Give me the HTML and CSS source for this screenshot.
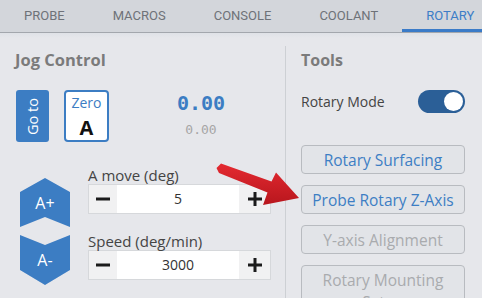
FILE: index.html
```html
<!DOCTYPE html>
<html>
<head>
<meta charset="utf-8">
<link rel="stylesheet" href="styles.css">
</head>
<body>
<nav class="tabs">
  <div class="tab">Probe</div>
  <div class="tab">Macros</div>
  <div class="tab">Console</div>
  <div class="tab">Coolant</div>
  <div class="tab active">Rotary</div>
</nav>
<main class="main">
  <section class="left">
    <h2 class="heading">Jog Control</h2>
    <div class="pos-row">
      <button class="goto"><span>Go to</span></button>
      <button class="zero"><span class="zl">Zero</span><span class="za">A</span></button>
      <div class="readout">
        <div class="big">0.00</div>
        <div class="small">0.00</div>
      </div>
    </div>
    <div class="jog-row">
      <div class="jog-btns">
        <button class="jog plus">A+</button>
        <button class="jog minus">A-</button>
      </div>
      <div class="fields">
        <label class="field-label">A move (deg)</label>
        <div class="stepper">
          <span class="step dec"><svg width="14" height="14" viewBox="0 0 14 14"><path d="M0 7H14" stroke="#1b1b1b" stroke-width="3"/></svg></span>
          <span class="val">5</span>
          <span class="step inc"><svg width="14" height="14" viewBox="0 0 14 14"><path d="M0 7H14M7 0V14" stroke="#1b1b1b" stroke-width="3"/></svg></span>
        </div>
        <label class="field-label second">Speed (deg/min)</label>
        <div class="stepper">
          <span class="step dec"><svg width="14" height="14" viewBox="0 0 14 14"><path d="M0 7H14" stroke="#1b1b1b" stroke-width="3"/></svg></span>
          <span class="val">3000</span>
          <span class="step inc"><svg width="14" height="14" viewBox="0 0 14 14"><path d="M0 7H14M7 0V14" stroke="#1b1b1b" stroke-width="3"/></svg></span>
        </div>
      </div>
    </div>
  </section>
  <section class="right">
    <h2 class="heading">Tools</h2>
    <div class="mode-row">
      <span class="mode-label">Rotary Mode</span>
      <span class="toggle"><span class="knob"></span></span>
    </div>
    <div class="tools">
      <button class="tool">Rotary Surfacing</button>
      <button class="tool">Probe Rotary Z-Axis</button>
      <button class="tool disabled">Y-axis Alignment</button>
      <button class="tool disabled tall">Rotary Mounting Setup</button>
    </div>
  </section>
</main>
<svg class="callout" width="482" height="298" viewBox="0 0 482 298">
  <defs>
    <linearGradient id="red" x1="0" y1="0" x2="0" y2="1">
      <stop offset="0" stop-color="#e42a31"/>
      <stop offset="1" stop-color="#b8161d"/>
    </linearGradient>
  </defs>
  <polygon fill="url(#red)" points="221,163.5 271.5,181.5 276,172.5 299,198 263,205 267.5,192.5 219,173 216.5,168"/>
</svg>
</body>
</html>
```
FILE: styles.css
```css
body {
  margin: 0;
  width: 482px;
  height: 298px;
  overflow: hidden;
  background: #e6e7eb;
  font-family: "Open Sans", "Liberation Sans", sans-serif;
  position: relative;
}

.tabs {
  display: flex;
  height: 32px;
  background: #d3d6db;
  border-bottom: 1px solid #a3a7ad;
  overflow: hidden;
}

.tab {
  flex: none;
  padding: 0 24px;
  font-family: Roboto, "Liberation Sans", sans-serif;
  font-size: 13px;
  text-transform: uppercase;
  color: #6e7278;
  line-height: 32px;
}

.tab.active {
  color: #3c7dc7;
  box-shadow: inset 0 -3px 0 #3a7bc8;
}

.main {
  display: flex;
  height: 265px;
  background: linear-gradient(#dfe2e7, #e6e7eb 5px);
}

.left {
  width: 286px;
  box-sizing: border-box;
  margin-top: 13px;
  padding: 3px 0 0 15px;
  border-right: 1px solid #cdd0d4;
}

.heading {
  margin: 0;
  font-size: 16.5px;
  font-weight: 700;
  line-height: 22px;
  color: #7b7b7b;
}

.right .heading {
  font-size: 16px;
}

.pos-row {
  display: flex;
  margin-top: 19px;
  height: 52px;
}

button {
  font-family: inherit;
  cursor: pointer;
}

.goto {
  margin-left: 1px;
  width: 33px;
  height: 52px;
  padding: 0;
  border: none;
  border-radius: 3px;
  background: #3c7dc3;
  color: #fff;
  display: flex;
  align-items: center;
  justify-content: center;
}

.goto span {
  writing-mode: vertical-rl;
  transform: rotate(180deg);
  font-size: 14.5px;
}

.zero {
  margin-left: 15px;
  width: 45px;
  height: 52px;
  box-sizing: border-box;
  padding: 2px 0 0;
  border: 2px solid #3c7dc3;
  border-radius: 4px;
  background: #fff;
  display: flex;
  flex-direction: column;
  align-items: center;
}

.zl {
  font-size: 14px;
  line-height: 18px;
  color: #3c7dc3;
}

.za {
  margin-top: 4px;
  font-size: 20px;
  font-weight: 700;
  line-height: 24px;
  color: #111;
}

.readout {
  flex: 1;
  margin-left: 8px;
  padding-top: 1px;
  text-align: center;
}

.big {
  font-family: "DejaVu Sans Mono", monospace;
  font-weight: 700;
  font-size: 20px;
  line-height: 24px;
  color: #3c7dc3;
}

.small {
  margin-top: 7px;
  font-family: "DejaVu Sans Mono", monospace;
  font-size: 13px;
  line-height: 16px;
  color: #a6a6a6;
}

.jog-row {
  display: flex;
  margin-top: 24px;
}

.jog-btns {
  margin: 12px 0 0 5px;
  width: 50px;
  display: flex;
  flex-direction: column;
  gap: 8px;
}

.jog {
  width: 50px;
  padding: 0;
  border: none;
  background: #3c7dc3;
  color: #fff;
  font-size: 16px;
}

.jog.plus {
  height: 49px;
  clip-path: polygon(50% 0, 100% 14px, 100% 100%, 50% 39px, 0 100%, 0 14px);
}

.jog.minus {
  height: 50px;
  clip-path: polygon(0 0, 50% 10px, 100% 0, 100% 35px, 50% 100%, 0 35px);
}

.fields {
  margin-left: 18px;
  width: 183px;
}

.field-label {
  display: block;
  font-size: 15px;
  line-height: 18px;
  color: #444;
}

.field-label.second {
  margin-top: 18px;
}

.stepper {
  display: flex;
  height: 30px;
  box-sizing: border-box;
  border: 1px solid #d6d8db;
  background: #fff;
}

.step {
  width: 28px;
  background: #f1f1f2;
  display: flex;
  align-items: center;
  justify-content: center;
}

.step.inc {
  width: 31px;
}

.val {
  flex: 1;
  text-align: center;
  font-size: 14px;
  line-height: 28px;
  color: #333;
}

.right {
  flex: 1;
  margin-top: 13px;
  padding: 3px 0 0 15px;
}

.mode-row {
  display: flex;
  align-items: center;
  justify-content: space-between;
  width: 164px;
  height: 23px;
  margin-top: 19px;
}

.mode-label {
  font-size: 14px;
  color: #444;
}

.toggle {
  width: 47px;
  height: 23px;
  box-sizing: border-box;
  padding: 2px;
  border-radius: 12px;
  background: #2b5f97;
  display: flex;
  justify-content: flex-end;
}

.knob {
  width: 19px;
  height: 19px;
  border-radius: 50%;
  background: #fff;
}

.tools {
  display: flex;
  flex-direction: column;
  gap: 11px;
  width: 164px;
  margin-top: 32px;
}

.tool {
  height: 29px;
  box-sizing: border-box;
  padding: 0 10px;
  border: 1px solid #b8bbc0;
  border-radius: 4px;
  background: #e2e4e8;
  color: #3d7ec4;
  font-size: 15.5px;
  line-height: 22px;
}

.tool.disabled {
  color: #a9abae;
}

.tool.tall {
  height: auto;
  padding: 3px 10px;
}

.callout {
  position: absolute;
  left: 0;
  top: 0;
  pointer-events: none;
}
```
